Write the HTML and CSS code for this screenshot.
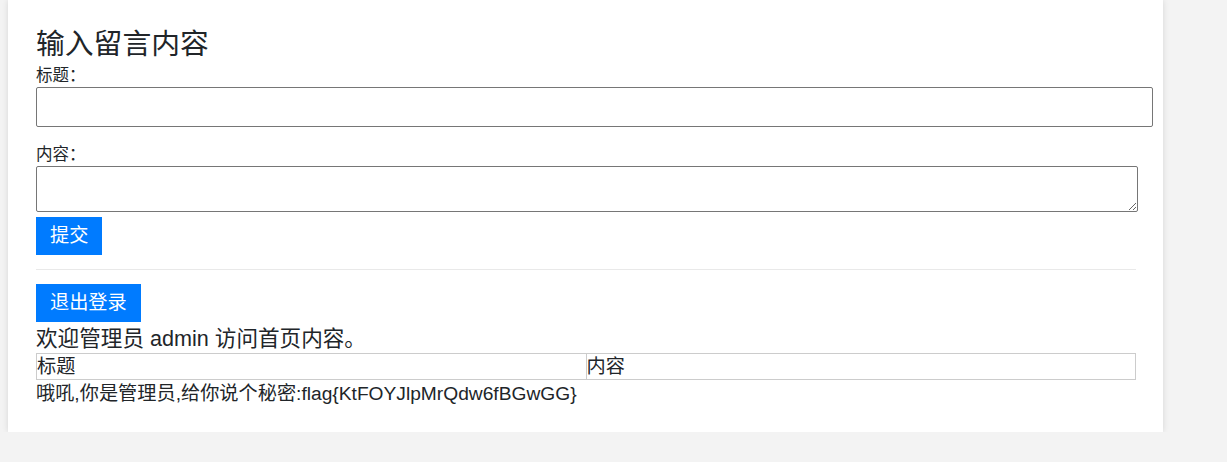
FILE: index.html
```html
<!DOCTYPE html>
<html lang="zh-CN">
<head>
<meta charset="utf-8">
<title>留言板</title>
<link rel="stylesheet" href="styles.css">
</head>
<body>
<div class="card">
  <h3 class="title">输入留言内容</h3>
  <form class="msg-form">
    <label class="lbl">标题：</label>
    <input class="field-input" type="text">
    <label class="lbl lbl-second">内容：</label>
    <textarea class="field-area"></textarea>
    <button type="button" class="btn">提交</button>
  </form>
  <hr class="divider">
  <button type="button" class="btn">退出登录</button>
  <div class="welcome">欢迎管理员 admin 访问首页内容。</div>
  <table class="msg-table">
    <tr><td>标题</td><td>内容</td></tr>
  </table>
  <div class="secret">哦吼,你是管理员,给你说个秘密:flag{KtFOYJlpMrQdw6fBGwGG}</div>
</div>
</body>
</html>
```

FILE: styles.css
```css
html, body {
  margin: 0;
  padding: 0;
  background: #f3f3f3;
}
body {
  font-family: "Liberation Sans", "Noto Sans CJK SC", sans-serif;
  color: #212529;
}
.card {
  margin-left: 8px;
  width: 1155px;
  box-sizing: border-box;
  background: #fff;
  padding: 25px 27px 24px 28px;
  box-shadow: 0 0 6px rgba(0, 0, 0, 0.12);
}
.title {
  margin: 0;
  font-size: 28.8px;
  line-height: 39px;
  font-weight: normal;
}
.msg-form {
  margin: 0;
}
.lbl {
  display: block;
  font-size: 16.5px;
  line-height: 23px;
}
.lbl-second {
  margin-top: 16px;
}
.field-input {
  display: block;
  box-sizing: border-box;
  width: 1117px;
  height: 40px;
  margin: 0;
  border: 1px solid #767676;
  border-radius: 2px;
  padding: 0 8px;
  font-size: 16px;
}
.field-area {
  display: block;
  box-sizing: border-box;
  width: 1102px;
  height: 46px;
  margin: 0;
  border: 1px solid #767676;
  border-radius: 2px;
  padding: 2px;
  font-size: 16px;
  font-family: inherit;
}
.btn {
  display: block;
  height: 38px;
  margin: 5px 0 0;
  padding: 0 14px;
  border: none;
  background: #007bff;
  color: #fff;
  font-family: "Liberation Sans", "Noto Sans CJK SC", sans-serif;
  font-size: 19.2px;
  line-height: 38px;
}
.divider {
  width: 1100px;
  margin: 14px 0 14px;
  border: none;
  border-top: 1px solid #e9e9e9;
  height: 0;
}
.divider + .btn {
  margin-top: 0;
}
.welcome {
  margin-top: 2px;
  font-size: 21.6px;
  line-height: 29px;
}
.msg-table {
  width: 1100px;
  border-collapse: collapse;
  table-layout: fixed;
}
.msg-table td {
  border: 1px solid #ccc;
  padding: 0;
  font-size: 19.2px;
  line-height: 25px;
  width: 50%;
}
.secret {
  font-size: 19.2px;
  line-height: 28px;
}
```
